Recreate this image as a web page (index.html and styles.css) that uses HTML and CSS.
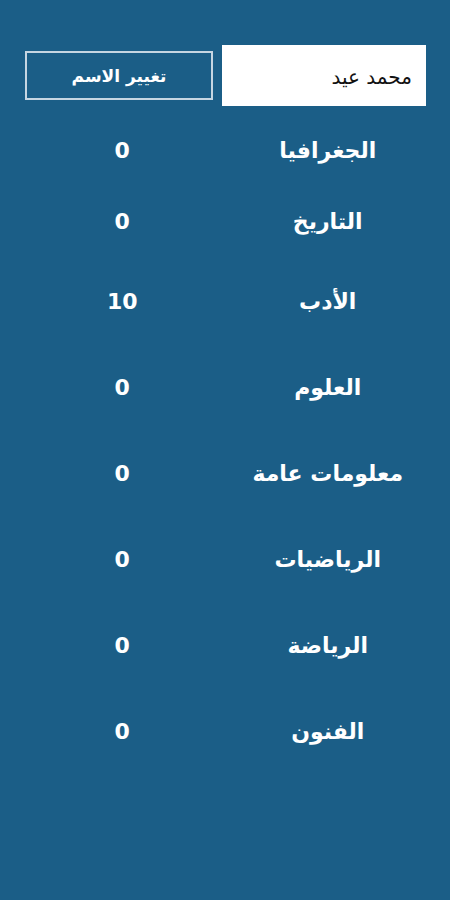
FILE: index.html
```html
<!DOCTYPE html>
<html lang="ar" dir="rtl">
<head>
  <meta charset="UTF-8" />
  <title>النتائج</title>
  <link rel="stylesheet" href="styles.css">
</head>
<body>
  <div class="top">
    <input class="name" type="text" value="محمد عيد" />
    <button class="rename" type="button">تغيير الاسم</button>
  </div>

  <div class="scores">
    <div class="row first"><span class="subject">الجغرافيا</span><span class="score">0</span></div>
    <div class="row second"><span class="subject">التاريخ</span><span class="score">0</span></div>
    <div class="row"><span class="subject">الأدب</span><span class="score">10</span></div>
    <div class="row"><span class="subject">العلوم</span><span class="score">0</span></div>
    <div class="row"><span class="subject">معلومات عامة</span><span class="score">0</span></div>
    <div class="row"><span class="subject">الرياضيات</span><span class="score">0</span></div>
    <div class="row"><span class="subject">الرياضة</span><span class="score">0</span></div>
    <div class="row"><span class="subject">الفنون</span><span class="score">0</span></div>
  </div>
</body>
</html>
```

FILE: styles.css
```css
body {
  margin: 0;
  height: 100vh;
  background: #1b5e87;
  font-family: "DejaVu Sans", sans-serif;
  color: #fff;
}
.top {
  display: flex;
  align-items: center;
  gap: 9px;
  padding: 45px 24px 0 25px;
}
.name {
  box-sizing: border-box;
  width: 204px;
  height: 61px;
  border: none;
  padding: 2px 14px 0;
  background: #fff;
  color: #111;
  font-family: "DejaVu Sans", sans-serif;
  font-size: 20px;
  outline: none;
}
.rename {
  box-sizing: border-box;
  width: 188px;
  height: 49px;
  padding-top: 2px;
  background: transparent;
  border: 2px solid #c6d6e2;
  color: #fff;
  font-family: "DejaVu Sans", sans-serif;
  font-weight: bold;
  font-size: 17px;
}
.scores {
  margin-top: 10px;
  padding: 0 24px;
}
.row {
  display: grid;
  grid-template-columns: 1fr 1fr;
  gap: 9px;
  align-items: center;
  height: 86px;
  font-weight: bold;
  font-size: 22px;
  text-align: center;
}
.row.first {
  height: 68px;
}
.row.second {
  height: 74px;
}
```
